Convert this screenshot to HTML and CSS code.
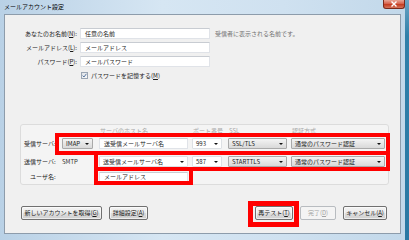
FILE: index.html
```html
<!DOCTYPE html>
<html lang="ja">
<head>
    <meta charset="UTF-8">
    <title>メールアカウント設定</title>
    <link rel="stylesheet" href="styles.css">
</head>
<body>
    <div class="window">
        <div class="frame">
            <div class="titlebar">
                <span class="title">メールアカウント設定</span>
                <span class="close">
                    <svg width="8" height="6" viewBox="0 0 8 6"><path d="M1.5 0.5 L6.5 5.5 M6.5 0.5 L1.5 5.5" stroke="#fff" stroke-width="1.4"/></svg>
                </span>
            </div>
            <div class="content">
                <div class="account-form">
                    <label>あなたのお名前(<u>N</u>):</label>
                    <div class="textbox">任意の名前</div>
                    <span class="hint">受信者に表示される名前です。</span>

                    <label>メールアドレス(<u>L</u>):</label>
                    <div class="textbox">メールアドレス</div>
                    <span></span>

                    <label>パスワード(<u>P</u>):</label>
                    <div class="textbox">メールパスワード</div>
                    <span></span>
                </div>

                <div class="check-row">
                    <span class="checkbox">
                        <svg width="5" height="5" viewBox="0 0 5 5"><path d="M0.6 2.6 L2 4 L4.4 0.8" stroke="#4a6a9a" stroke-width="0.9" fill="none"/></svg>
                    </span>
                    <span>パスワードを記憶する(<u>M</u>)</span>
                </div>

                <div class="server-group">
                    <div class="server-row head-row">
                        <span></span>
                        <span></span>
                        <span class="col-head">サーバのホスト名</span>
                        <span class="col-head">ポート番号</span>
                        <span class="col-head">SSL</span>
                        <span class="col-head">認証方式</span>
                    </div>
                    <div class="server-row row-in">
                        <span class="row-label">受信サーバ:</span>
                        <div class="combo proto">IMAP<i class="arrow"></i></div>
                        <div class="textbox host">送受信メールサーバ名</div>
                        <div class="edit-combo port">993<i class="arrow"></i></div>
                        <div class="combo ssl">SSL/TLS<i class="arrow"></i></div>
                        <div class="combo auth">通常のパスワード認証<i class="arrow"></i></div>
                    </div>
                    <div class="server-row row-out">
                        <span class="row-label">送信サーバ:</span>
                        <span class="plain">SMTP</span>
                        <div class="edit-combo host">送受信メールサーバ名<i class="arrow"></i></div>
                        <div class="edit-combo port">587<i class="arrow"></i></div>
                        <div class="combo ssl">STARTTLS<i class="arrow"></i></div>
                        <div class="combo auth">通常のパスワード認証<i class="arrow"></i></div>
                    </div>
                    <div class="server-row row-user">
                        <span class="row-label user-label">ユーザ名:</span>
                        <span></span>
                        <div class="textbox host">メールアドレス</div>
                    </div>
                </div>

                <div class="button-bar">
                    <button class="btn btn-new">新しいアカウントを取得(<u>G</u>)</button>
                    <button class="btn btn-adv">詳細設定(<u>A</u>)</button>
                    <span class="spacer"></span>
                    <button class="btn btn-retest">再テスト(<u>T</u>)</button>
                    <button class="btn btn-done" disabled>完了(<u>D</u>)</button>
                    <button class="btn btn-cancel">キャンセル(<u>A</u>)</button>
                </div>
            </div>
        </div>
        <div class="edge"></div>

        <!-- annotation boxes -->
        <div class="mark mark-in"></div>
        <div class="mark mark-out"></div>
        <div class="mark mark-user"></div>
        <div class="mark mark-retest"></div>
    </div>
</body>
</html>
```

FILE: styles.css
```css
body {
    margin: 0;
    padding: 0;
    font-family: "Noto Sans CJK JP", "Noto Sans", sans-serif;
    font-size: 6px;
    color: #1a1a1a;
}

u {
    text-decoration: underline;
}

.window {
    position: relative;
    width: 409px;
    height: 240px;
    display: flex;
    overflow: hidden;
}

.frame {
    flex: 1;
    display: flex;
    flex-direction: column;
    background: linear-gradient(90deg, #b9d1e6 0%, #d6e6f3 40%, #cfe1f0 70%, #c2d8ea 100%);
}

.edge {
    width: 4px;
    background: linear-gradient(180deg, #6aa3c4 0%, #2f7fa9 15%, #2a78a3 100%);
}

.titlebar {
    height: 14px;
    display: flex;
    align-items: flex-start;
    justify-content: space-between;
}

.title {
    margin: 3px 0 0 4px;
    line-height: 8px;
    color: #000;
}

.close {
    width: 22px;
    height: 9px;
    display: flex;
    align-items: center;
    justify-content: center;
    background: linear-gradient(180deg, #e8a596 0%, #d7634d 45%, #c43d22 55%, #d4735a 100%);
    border: 1px solid #7a2a1c;
    border-top: none;
    border-radius: 0 0 3px 3px;
    box-sizing: border-box;
}

.content {
    flex: 1;
    margin: 0 4px 6px 4px;
    background: #f0f0f0;
    border: 1px solid #8d9cab;
    display: flex;
    flex-direction: column;
}

.account-form {
    display: grid;
    grid-template-columns: 72px 130px 1fr;
    column-gap: 3px;
    row-gap: 3px;
    grid-auto-rows: 11px;
    margin-top: 13px;
    align-items: center;
}

.account-form label {
    text-align: right;
    line-height: 11px;
    color: #1a1a1a;
}

.textbox {
    height: 11px;
    box-sizing: border-box;
    background: #fff;
    border: 1px solid #e0e3e8;
    border-top-color: #c8ccd2;
    padding-left: 4px;
    line-height: 9px;
    white-space: nowrap;
}

.hint {
    margin-left: 2px;
    color: #707070;
    line-height: 11px;
}

.check-row {
    display: flex;
    align-items: center;
    gap: 3px;
    margin: 4px 0 0 76px;
    height: 9px;
}

.checkbox {
    width: 7px;
    height: 7px;
    box-sizing: border-box;
    border: 1px solid #9aa5b3;
    background: linear-gradient(135deg, #dfe3e8, #f8f8f8);
    display: flex;
    align-items: center;
    justify-content: center;
}

.server-group {
    margin: 44px 0 0 15px;
    width: 369px;
    box-sizing: border-box;
    background: #f4f4f4;
    border: 1px solid #dcdcdc;
    border-radius: 3px;
    padding: 1px 0 3px 3px;
    display: flex;
    flex-direction: column;
}

.server-row {
    display: grid;
    grid-template-columns: 38px 37px 93px 36px 63px 94px;
    align-items: center;
}

.head-row {
    height: 9px;
}

.col-head {
    color: #a8a8a8;
    padding-left: 1px;
    line-height: 9px;
}

.row-in {
    margin-top: 3px;
    height: 11px;
}

.row-out {
    margin-top: 7px;
    height: 11px;
}

.row-user {
    margin-top: 4px;
    height: 10px;
}

.row-label {
    line-height: 11px;
}

.user-label {
    padding-left: 6px;
}

.plain {
    color: #303030;
}

.combo,
.edit-combo {
    position: relative;
    height: 11px;
    box-sizing: border-box;
    line-height: 9px;
    padding-left: 3px;
    white-space: nowrap;
    border: 1px solid #a9a9a9;
    border-radius: 1px;
}

.combo {
    background: linear-gradient(180deg, #f4f4f4 0%, #e6e6e6 50%, #d9d9d9 100%);
}

.edit-combo {
    background: #fff;
    border-color: #dde0e4;
}

.arrow {
    position: absolute;
    right: 3px;
    top: 4px;
    width: 0;
    height: 0;
    border-left: 2px solid transparent;
    border-right: 2px solid transparent;
    border-top: 2px solid #111;
}

.proto { width: 31px; }
.host { width: 89px; }
.port { width: 30px; }
.ssl { width: 59px; }
.auth { width: 94px; }

.row-user .textbox.host {
    height: 10px;
    line-height: 8px;
}

.button-bar {
    display: flex;
    align-items: center;
    gap: 7px;
    margin: 21px 13px 0 16px;
}

.spacer {
    flex: 1;
}

.btn {
    height: 14px;
    padding: 0;
    font-family: inherit;
    font-size: 6px;
    line-height: 12px;
    color: #1a1a1a;
    border: 1px solid #707070;
    border-radius: 2px;
    background: linear-gradient(180deg, #f3f3f3 0%, #ebebeb 48%, #dddddd 52%, #cfcfcf 100%);
    box-shadow: inset 0 0 0 1px rgba(255, 255, 255, 0.6);
}

.btn-new { width: 81px; }
.btn-adv { width: 39px; }
.btn-retest { width: 38px; }
.btn-done {
    width: 36px;
    color: #a3a3a3;
    border-color: #b8bcc0;
    background: #f4f4f4;
    box-shadow: none;
}
.btn-cancel { width: 44px; }

/* red annotation frames drawn on top of the dialog */
.mark {
    position: absolute;
    border: 4px solid #ff0000;
    box-sizing: border-box;
    pointer-events: none;
}

.mark-in {
    left: 55px;
    top: 133px;
    width: 335px;
    height: 22px;
}

.mark-out {
    left: 94px;
    top: 151px;
    width: 296px;
    height: 20px;
}

.mark-user {
    left: 94px;
    top: 167px;
    width: 99px;
    height: 18px;
}

.mark-retest {
    left: 248px;
    top: 201px;
    width: 51px;
    height: 26px;
    border-width: 5px;
}
```
